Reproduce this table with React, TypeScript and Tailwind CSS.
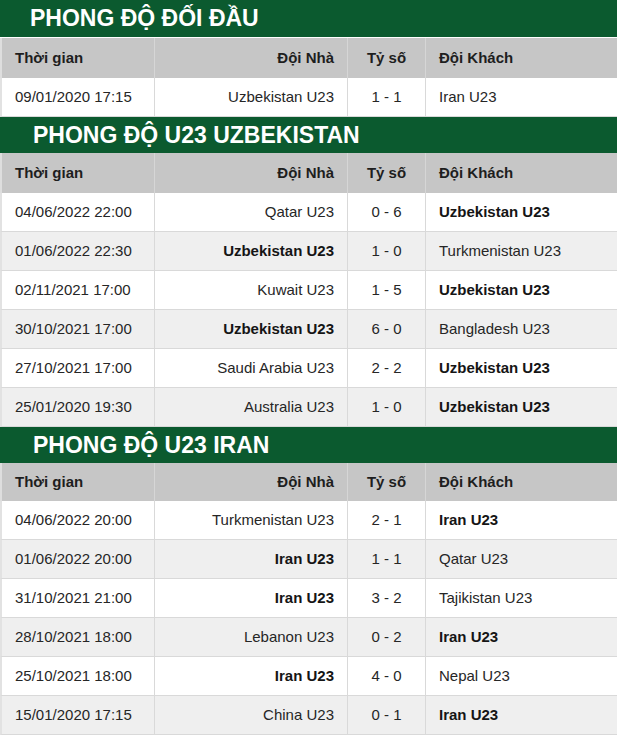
import React from "react";

type Row = { t: string; h: string; s: string; a: string; hb?: boolean; ab?: boolean };

const s1: Row[] = [{ t: "09/01/2020 17:15", h: "Uzbekistan U23", s: "1 - 1", a: "Iran U23" }];
const s2: Row[] = [
  { t: "04/06/2022 22:00", h: "Qatar U23", s: "0 - 6", a: "Uzbekistan U23", ab: true },
  { t: "01/06/2022 22:30", h: "Uzbekistan U23", s: "1 - 0", a: "Turkmenistan U23", hb: true },
  { t: "02/11/2021 17:00", h: "Kuwait U23", s: "1 - 5", a: "Uzbekistan U23", ab: true },
  { t: "30/10/2021 17:00", h: "Uzbekistan U23", s: "6 - 0", a: "Bangladesh U23", hb: true },
  { t: "27/10/2021 17:00", h: "Saudi Arabia U23", s: "2 - 2", a: "Uzbekistan U23", ab: true },
  { t: "25/01/2020 19:30", h: "Australia U23", s: "1 - 0", a: "Uzbekistan U23", ab: true },
];
const s3: Row[] = [
  { t: "04/06/2022 20:00", h: "Turkmenistan U23", s: "2 - 1", a: "Iran U23", ab: true },
  { t: "01/06/2022 20:00", h: "Iran U23", s: "1 - 1", a: "Qatar U23", hb: true },
  { t: "31/10/2021 21:00", h: "Iran U23", s: "3 - 2", a: "Tajikistan U23", hb: true },
  { t: "28/10/2021 18:00", h: "Lebanon U23", s: "0 - 2", a: "Iran U23", ab: true },
  { t: "25/10/2021 18:00", h: "Iran U23", s: "4 - 0", a: "Nepal U23", hb: true },
  { t: "15/01/2020 17:15", h: "China U23", s: "0 - 1", a: "Iran U23", ab: true },
];

const grid = "grid grid-cols-[153px_193px_78px_1fr]";

function Section({ title, rows, first, headerH }: { title: string; rows: Row[]; first?: boolean; headerH: string }) {
  return (
    <div>
      <div
        className={`${first ? "h-[37px] mb-[1px]" : "h-[36px]"} bg-[#0b5a2f] text-white font-bold text-[23px] flex items-center ${first ? "pl-[30px]" : "pl-[33px]"}`}
      >
        {title}
      </div>
      <div className={`${grid} ${headerH} bg-[#c6c6c6] text-[15px] font-bold text-[#1e1e1e] border-l-2 border-[#dedede]`}>
        <div className="flex items-center pl-[13px] border-r border-[#d6d6d6]">Thời gian</div>
        <div className="flex items-center justify-end pr-[13px] border-r border-[#d6d6d6]">Đội Nhà</div>
        <div className="flex items-center justify-center border-r border-[#d6d6d6]">Tỷ số</div>
        <div className="flex items-center pl-[13px]">Đội Khách</div>
      </div>
      {rows.map((r, i) => (
        <div
          key={i}
          className={`${grid} h-[39px] border-b border-[#d9d9d9] border-l-2 border-l-[#e2e2e2] text-[15px] text-[#262626] ${i % 2 === 0 ? "bg-white" : "bg-[#efefef]"}`}
        >
          <div className="flex items-center pl-[13px] border-r border-[#d9d9d9]">{r.t}</div>
          <div className={`flex items-center justify-end pr-[13px] border-r border-[#d9d9d9] ${r.hb ? "font-bold text-[#151515]" : ""}`}>{r.h}</div>
          <div className="flex items-center justify-center border-r border-[#d9d9d9]">{r.s}</div>
          <div className={`flex items-center pl-[13px] ${r.ab ? "font-bold text-[#151515]" : ""}`}>{r.a}</div>
        </div>
      ))}
    </div>
  );
}

export default function App() {
  return (
    <div className="w-[617px] h-[735px] overflow-hidden bg-white font-['Liberation_Sans',Arial,sans-serif]">
      <Section title="PHONG ĐỘ ĐỐI ĐẦU" rows={s1} first headerH="h-[40px]" />
      <Section title="PHONG ĐỘ U23 UZBEKISTAN" rows={s2} headerH="h-[40px]" />
      <Section title="PHONG ĐỘ U23 IRAN" rows={s3} headerH="h-[38px]" />
    </div>
  );
}
